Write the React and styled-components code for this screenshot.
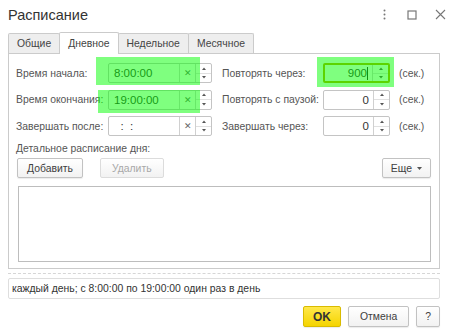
import React from "react";
import styled, { createGlobalStyle, css } from "styled-components";

const GlobalStyle = createGlobalStyle`
  html, body {
    margin: 0;
    padding: 0;
    background: #fff;
  }
  body {
    font-family: "Liberation Sans", Arial, sans-serif;
    font-size: 10.4px;
    color: #4d4d4d;
  }
`;

const Window = styled.div`
  width: 454px;
  height: 335px;
  background: #fff;
  display: flex;
  flex-direction: column;
  overflow: hidden;
`;

const Header = styled.div`
  height: 32px;
  display: flex;
  align-items: center;
  padding: 0 7px 0 8px;
`;

const Title = styled.div`
  flex: 1;
  font-size: 14.5px;
  color: #333;
  margin-top: -3px;
`;

const HeaderIcons = styled.div`
  display: flex;
  align-items: center;
  gap: 14px;
  margin-top: -3px;
  color: #7a7a7a;
`;

const IconBox = styled.div`
  width: 14px;
  height: 14px;
  display: flex;
  align-items: center;
  justify-content: center;
`;

const Tabs = styled.div`
  display: flex;
  align-items: flex-end;
  padding-left: 8px;
  height: 21px;
  position: relative;
  z-index: 1;
`;

const Tab = styled.div`
  height: 19px;
  padding: 0 8px;
  display: flex;
  align-items: center;
  border: 1px solid #cbcbcb;
  border-bottom: none;
  border-radius: 2px 2px 0 0;
  background: #eeeeee;
  color: #444;
  margin-right: -1px;
  ${({ $active }) =>
    $active &&
    css`
      height: 21px;
      background: #fff;
      margin-bottom: -1px;
      position: relative;
      z-index: 2;
    `}
`;

const Panel = styled.div`
  margin: 0 14px 0 8px;
  border: 1px solid #cbcbcb;
  padding: 9px 8px 6px 7px;
  display: flex;
  flex-direction: column;
`;

const FormGrid = styled.div`
  display: grid;
  grid-template-columns: 92px 104px 111px 67px auto;
  grid-auto-rows: 20px;
  row-gap: 6.5px;
  align-items: center;
`;

const Label = styled.div`
  color: #555;
  white-space: nowrap;
  padding-left: ${({ $indent }) => $indent || 0}px;
`;

const Unit = styled.div`
  color: #555;
  padding-left: 9px;
`;

const Cell = styled.div`
  position: relative;
  height: 20px;
`;

const Field = styled.div`
  height: 100%;
  box-sizing: border-box;
  display: flex;
  border: 1px solid #c4c4c4;
  border-radius: 2px;
  background: #fff;
  ${({ $focused }) =>
    $focused &&
    css`
      border: 2px solid #b8a800;
    `}
`;

const FieldText = styled.div`
  flex: 1;
  display: flex;
  align-items: center;
  justify-content: ${({ $right }) => ($right ? "flex-end" : "flex-start")};
  padding: 0 4px 0 5px;
  color: #333;
  font-size: 11.5px;
`;

const Caret = styled.span`
  display: inline-block;
  width: 1px;
  height: 13px;
  background: #222;
`;

const ClearCell = styled.div`
  width: 15px;
  border-left: 1px solid #d0d0d0;
  display: flex;
  align-items: center;
  justify-content: center;
  color: #666;
  font-size: 9px;
`;

const Spin = styled.div`
  width: 15px;
  border-left: 1px solid #d0d0d0;
  display: flex;
  flex-direction: column;
`;

const SpinHalf = styled.div`
  flex: 1;
  display: flex;
  align-items: center;
  justify-content: center;
  & + & {
    border-top: 1px solid #e0e0e0;
  }
`;

const Highlight = styled.div`
  position: absolute;
  top: ${({ $t }) => $t}px;
  left: ${({ $l }) => $l}px;
  right: ${({ $r }) => $r}px;
  bottom: ${({ $b }) => $b}px;
  background: rgba(0, 255, 0, 0.5);
  pointer-events: none;
`;

const SectionLabel = styled.div`
  margin-top: 6px;
  color: #555;
  line-height: 13px;
`;

const CommandBar = styled.div`
  margin-top: 3px;
  display: flex;
  align-items: center;
  gap: 17px;
  padding-left: 1px;
`;

const Button = styled.div`
  height: ${({ $h }) => $h || 21}px;
  box-sizing: border-box;
  padding: 0 ${({ $pad }) => $pad || 10}px;
  display: flex;
  align-items: center;
  justify-content: center;
  gap: 5px;
  border: 1px solid ${({ $disabled }) => ($disabled ? "#dcdcdc" : "#c2c2c2")};
  border-radius: 2px;
  background: linear-gradient(#ffffff, #f2f2f2);
  box-shadow: ${({ $disabled }) =>
    $disabled ? "none" : "0 1px 1px rgba(0,0,0,0.08)"};
  color: ${({ $disabled }) => ($disabled ? "#a8a8a8" : "#404040")};
  white-space: nowrap;
  ${({ $primary }) =>
    $primary &&
    css`
      background: linear-gradient(#ffe84a, #f5d400);
      border-color: #d9bb00;
      color: #333;
      font-weight: bold;
      font-size: 12px;
    `}
`;

const Spacer = styled.div`
  flex: 1;
`;

const ListBox = styled.div`
  margin-top: 8px;
  height: 74px;
  border: 1px solid #bdbdbd;
  margin-left: 2px;
`;

const Dashed = styled.div`
  margin: 4px 14px 0 8px;
  border-top: 1px dashed #d6d6d6;
`;

const Summary = styled.div`
  margin: 4px 14px 0 8px;
  height: 21px;
  box-sizing: border-box;
  border: 1px solid #dedede;
  border-radius: 2px;
  display: flex;
  align-items: center;
  padding-left: 3px;
  color: #333;
`;

const Footer = styled.div`
  margin: 7px 14px 0 8px;
  display: flex;
  justify-content: flex-end;
  gap: 7px;
`;

const SpinArrows = () => (
  <>
    <SpinHalf>
      <svg width="4" height="3" viewBox="0 0 4 3">
        <path d="M0 3 L2 0.5 L4 3 Z" fill="#555" />
      </svg>
    </SpinHalf>
    <SpinHalf>
      <svg width="4" height="3" viewBox="0 0 4 3">
        <path d="M0 0 L2 2.5 L4 0 Z" fill="#555" />
      </svg>
    </SpinHalf>
  </>
);

const TimeField = ({ value, hl }) => (
  <Cell>
    <Field>
      <FieldText>{value}</FieldText>
      <ClearCell>✕</ClearCell>
      <Spin>
        <SpinArrows />
      </Spin>
    </Field>
    {hl && <Highlight $t={hl[0]} $r={hl[1]} $b={hl[2]} $l={hl[3]} />}
  </Cell>
);

const NumField = ({ value, hl, focused }) => (
  <Cell>
    <Field $focused={focused}>
      <FieldText $right>
        {value}
        {focused && <Caret />}
      </FieldText>
      <Spin>
        <SpinArrows />
      </Spin>
    </Field>
    {hl && <Highlight $t={hl[0]} $r={hl[1]} $b={hl[2]} $l={hl[3]} />}
  </Cell>
);

const tabs = ["Общие", "Дневное", "Недельное", "Месячное"];

export default function App() {
  return (
    <Window>
      <GlobalStyle />
      <Header>
        <Title>Расписание</Title>
        <HeaderIcons>
          <IconBox>
            <svg width="3" height="11" viewBox="0 0 3 11">
              <circle cx="1.5" cy="1.5" r="1" fill="#777" />
              <circle cx="1.5" cy="5.5" r="1" fill="#777" />
              <circle cx="1.5" cy="9.5" r="1" fill="#777" />
            </svg>
          </IconBox>
          <IconBox>
            <svg width="10" height="10" viewBox="0 0 10 10">
              <rect x="1" y="1" width="8" height="8" fill="none" stroke="#777" strokeWidth="1.2" />
            </svg>
          </IconBox>
          <IconBox>
            <svg width="11" height="11" viewBox="0 0 11 11">
              <path d="M1 1 L10 10 M10 1 L1 10" stroke="#777" strokeWidth="1.1" />
            </svg>
          </IconBox>
        </HeaderIcons>
      </Header>

      <Tabs>
        {tabs.map((t) => (
          <Tab key={t} $active={t === "Дневное"}>
            {t}
          </Tab>
        ))}
      </Tabs>

      <Panel>
        <FormGrid>
          <Label>Время начала:</Label>
          <TimeField value="8:00:00" hl={[-6, 12, -2, -12]} />
          <Label $indent={10}>Повторять через:</Label>
          <NumField value="900" focused hl={[-6, -4, -4, -6]} />
          <Unit>(сек.)</Unit>

          <Label>Время окончания:</Label>
          <TimeField value="19:00:00" hl={[0, 12, -3, -10]} />
          <Label $indent={10}>Повторять с паузой:</Label>
          <NumField value="0" />
          <Unit>(сек.)</Unit>

          <Label>Завершать после:</Label>
          <TimeField value={"\u00a0\u00a0:\u00a0\u00a0:"} />
          <Label $indent={10}>Завершать через:</Label>
          <NumField value="0" />
          <Unit>(сек.)</Unit>
        </FormGrid>

        <SectionLabel>Детальное расписание дня:</SectionLabel>
        <CommandBar>
          <Button $h={20} $pad={9}>
            Добавить
          </Button>
          <Button $h={20} $disabled $pad={11}>
            Удалить
          </Button>
          <Spacer />
          <Button $h={20} $pad={8}>
            Еще
            <svg width="5" height="3" viewBox="0 0 5 3">
              <path d="M0 0 L5 0 L2.5 3 Z" fill="#555" />
            </svg>
          </Button>
        </CommandBar>
        <ListBox />
      </Panel>

      <Dashed />
      <Summary>каждый день; с 8:00:00 по 19:00:00 один раз в день</Summary>

      <Footer>
        <Button $primary $pad={9}>
          OK
        </Button>
        <Button $pad={11}>Отмена</Button>
        <Button $pad={8}>?</Button>
      </Footer>
    </Window>
  );
}
